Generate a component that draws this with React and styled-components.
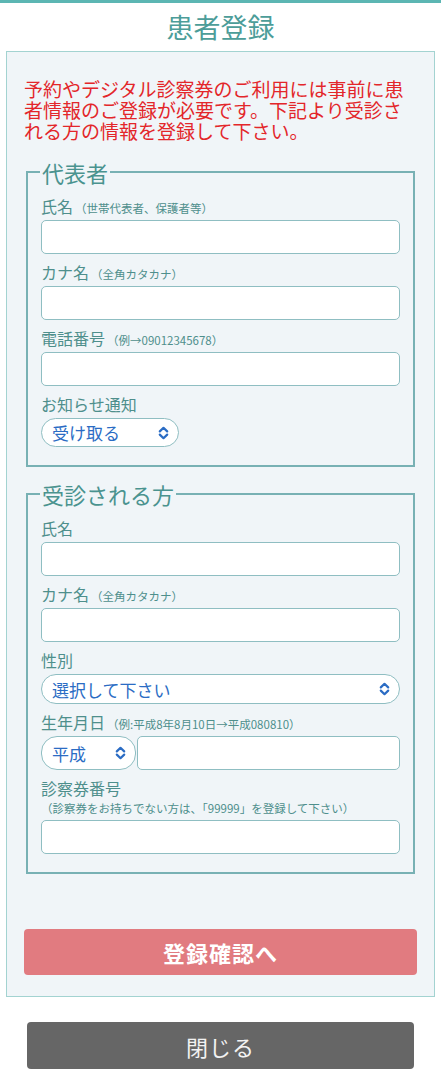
import React from 'react';
import styled, { createGlobalStyle } from 'styled-components';

const GlobalStyle = createGlobalStyle`
  html, body {
    margin: 0;
    padding: 0;
    background: #ffffff;
    font-family: "Noto Sans CJK JP", "Noto Sans", sans-serif;
  }
`;

const Page = styled.div`
  border-top: 3px solid #5cb6b3;
  padding-bottom: 18px;
`;

const Title = styled.h1`
  margin: 0;
  height: 48px;
  line-height: 48px;
  text-align: center;
  font-size: 27px;
  font-weight: 400;
  color: #4c9d99;
`;

const Panel = styled.div`
  margin: 0 6px;
  border: 1px solid #a3d3d1;
  background: #f0f5f8;
  padding: 26px 17px 21px;
`;

const Notice = styled.p`
  margin: 0 0 18px;
  font-size: 19px;
  line-height: 21px;
  color: #e3262a;
  letter-spacing: 0;
`;

const Group = styled.fieldset`
  margin: ${(p) => (p.$first ? '0 2px' : '14px 2px 0')};
  border: 2px solid #78b1b4;
  padding: 9px 13px 18px;
  min-width: 0;
`;

const Legend = styled.legend`
  padding: 0 2px;
  margin-left: -1px;
  font-size: 22px;
  line-height: 26px;
  color: #4a938f;
`;

const Label = styled.div`
  font-size: 16px;
  line-height: 24px;
  height: 24px;
  color: #4e8f8c;
  margin-top: ${(p) => (p.$first ? '0' : '6px')};
  margin-bottom: 2px;
  white-space: nowrap;
`;

const Small = styled.span`
  font-size: 11.5px;
  margin-left: 2px;
`;

const Note = styled.div`
  font-size: 11.5px;
  line-height: 18px;
  color: #4e8f8c;
  margin: -3px 0 3px 0;
  white-space: nowrap;
`;

const Input = styled.input`
  display: block;
  box-sizing: border-box;
  width: 100%;
  height: 34px;
  border: 1px solid #8fbec2;
  border-radius: 5px;
  background: #ffffff;
  padding: 0 8px;
  font-size: 16px;
  font-family: inherit;
  outline: none;
`;

const SelectWrap = styled.div`
  position: relative;
  box-sizing: border-box;
  width: ${(p) => p.$width || '100%'};
  flex: none;
  height: ${(p) => p.$height || '30px'};
`;

const Select = styled.select`
  appearance: none;
  -webkit-appearance: none;
  box-sizing: border-box;
  width: 100%;
  height: 100%;
  border: 1px solid #8fbec2;
  border-radius: 16px;
  background: #ffffff;
  padding: 0 30px 0 10px;
  font-size: 17px;
  font-family: inherit;
  color: #2b6cc4;
  outline: none;
`;

const Chevron = styled.svg`
  position: absolute;
  right: 10px;
  top: 50%;
  transform: translateY(-50%);
  pointer-events: none;
`;

const DateRow = styled.div`
  display: flex;
  align-items: stretch;
  height: 34px;
`;

const DateInput = styled(Input)`
  flex: 1;
  width: auto;
  height: 34px;
  margin-left: 1px;
`;

const SubmitButton = styled.button`
  display: block;
  width: 100%;
  height: 46px;
  margin-top: 55px;
  border: none;
  border-radius: 4px;
  background: #e17b80;
  color: #ffffff;
  font-size: 22px;
  font-weight: 700;
  font-family: inherit;
  letter-spacing: 1px;
`;

const CloseButton = styled.button`
  display: block;
  box-sizing: border-box;
  width: 387px;
  height: 47px;
  margin: 25px auto 0 27px;
  border: none;
  border-radius: 4px;
  background: #666666;
  color: #f2f2f2;
  font-size: 22px;
  font-family: inherit;
  letter-spacing: 1px;
`;

function UpDown() {
  return (
    <Chevron width="11" height="14" viewBox="0 0 11 14" fill="none">
      <path d="M1.8 5.4 L5.5 1.8 L9.2 5.4" stroke="#2b6cc4" strokeWidth="2.2" strokeLinecap="round" strokeLinejoin="round" />
      <path d="M1.8 8.6 L5.5 12.2 L9.2 8.6" stroke="#2b6cc4" strokeWidth="2.2" strokeLinecap="round" strokeLinejoin="round" />
    </Chevron>
  );
}

function Dropdown({ width, height, options, value }) {
  return (
    <SelectWrap $width={width} $height={height}>
      <Select defaultValue={value}>
        {options.map((o) => (
          <option key={o}>{o}</option>
        ))}
      </Select>
      <UpDown />
    </SelectWrap>
  );
}

export default function App() {
  return (
    <>
      <GlobalStyle />
      <Page>
        <Title>患者登録</Title>
        <Panel>
          <Notice>
            予約やデジタル診察券のご利用には事前に患者情報のご登録が必要です。下記より受診される方の情報を登録して下さい。
          </Notice>

          <Group $first>
            <Legend>代表者</Legend>
            <Label $first>
              氏名<Small>（世帯代表者、保護者等）</Small>
            </Label>
            <Input />
            <Label>
              カナ名<Small>（全角カタカナ）</Small>
            </Label>
            <Input />
            <Label>
              電話番号<Small>（例→09012345678）</Small>
            </Label>
            <Input type="tel" />
            <Label>お知らせ通知</Label>
            <Dropdown width="138px" height="29px" value="受け取る" options={['受け取る', '受け取らない']} />
          </Group>

          <Group>
            <Legend>受診される方</Legend>
            <Label $first>氏名</Label>
            <Input />
            <Label>
              カナ名<Small>（全角カタカナ）</Small>
            </Label>
            <Input />
            <Label>性別</Label>
            <Dropdown value="選択して下さい" options={['選択して下さい', '男性', '女性']} />
            <Label>
              生年月日<Small>（例:平成8年8月10日→平成080810）</Small>
            </Label>
            <DateRow>
              <Dropdown width="95px" height="34px" value="平成" options={['昭和', '平成', '令和']} />
              <DateInput />
            </DateRow>
            <Label>診察券番号</Label>
            <Note>（診察券をお持ちでない方は、「99999」を登録して下さい）</Note>
            <Input />
          </Group>

          <SubmitButton type="button">登録確認へ</SubmitButton>
        </Panel>
        <CloseButton type="button">閉じる</CloseButton>
      </Page>
    </>
  );
}
